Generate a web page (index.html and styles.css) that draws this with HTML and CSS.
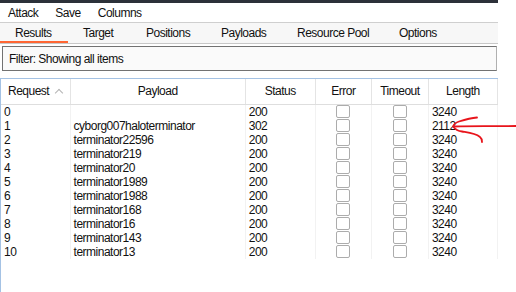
FILE: index.html
```html
<!DOCTYPE html>
<html lang="en">
<head>
    <meta charset="UTF-8">
    <title>Intruder attack</title>
    <link rel="stylesheet" href="styles.css">
</head>
<body>

<div class="window">
    <div class="titlebar"></div>

    <!--菜单-->
    <div class="menubar">
        <span class="menubar__item">Attack</span>
        <span class="menubar__item">Save</span>
        <span class="menubar__item">Columns</span>
    </div>

    <!--标签页-->
    <div class="tabs">
        <span class="tabs__tab tabs__tab--active">Results</span>
        <span class="tabs__tab">Target</span>
        <span class="tabs__tab">Positions</span>
        <span class="tabs__tab">Payloads</span>
        <span class="tabs__tab">Resource Pool</span>
        <span class="tabs__tab">Options</span>
    </div>

    <div class="filter">Filter: Showing all items</div>

    <!--结果表格-->
    <div class="results">
        <table class="grid">
            <colgroup>
                <col style="width:69px">
                <col style="width:175px">
                <col style="width:70px">
                <col style="width:56px">
                <col style="width:57px">
                <col style="width:69px">
            </colgroup>
            <thead>
            <tr>
                <th class="grid__sort">Request <span class="grid__arrow"></span></th>
                <th>Payload</th>
                <th>Status</th>
                <th>Error</th>
                <th>Timeout</th>
                <th>Length</th>
            </tr>
            </thead>
            <tbody>
            <tr><td>0</td><td></td><td>200</td><td class="grid__box"><span class="check"></span></td><td class="grid__box"><span class="check"></span></td><td>3240</td></tr>
            <tr><td>1</td><td>cyborg007haloterminator</td><td>302</td><td class="grid__box"><span class="check"></span></td><td class="grid__box"><span class="check"></span></td><td>2112</td></tr>
            <tr><td>2</td><td>terminator22596</td><td>200</td><td class="grid__box"><span class="check"></span></td><td class="grid__box"><span class="check"></span></td><td>3240</td></tr>
            <tr><td>3</td><td>terminator219</td><td>200</td><td class="grid__box"><span class="check"></span></td><td class="grid__box"><span class="check"></span></td><td>3240</td></tr>
            <tr><td>4</td><td>terminator20</td><td>200</td><td class="grid__box"><span class="check"></span></td><td class="grid__box"><span class="check"></span></td><td>3240</td></tr>
            <tr><td>5</td><td>terminator1989</td><td>200</td><td class="grid__box"><span class="check"></span></td><td class="grid__box"><span class="check"></span></td><td>3240</td></tr>
            <tr><td>6</td><td>terminator1988</td><td>200</td><td class="grid__box"><span class="check"></span></td><td class="grid__box"><span class="check"></span></td><td>3240</td></tr>
            <tr><td>7</td><td>terminator168</td><td>200</td><td class="grid__box"><span class="check"></span></td><td class="grid__box"><span class="check"></span></td><td>3240</td></tr>
            <tr><td>8</td><td>terminator16</td><td>200</td><td class="grid__box"><span class="check"></span></td><td class="grid__box"><span class="check"></span></td><td>3240</td></tr>
            <tr><td>9</td><td>terminator143</td><td>200</td><td class="grid__box"><span class="check"></span></td><td class="grid__box"><span class="check"></span></td><td>3240</td></tr>
            <tr><td>10</td><td>terminator13</td><td>200</td><td class="grid__box"><span class="check"></span></td><td class="grid__box"><span class="check"></span></td><td>3240</td></tr>
            </tbody>
        </table>
    </div>
</div>

<!--红色箭头标注-->
<svg class="mark" width="76" height="40" viewBox="0 0 76 40">
    <path d="M76 16 C66 16.5 40 15.5 14 16.5" fill="none" stroke="#e8141b" stroke-width="1.8" stroke-linecap="round"/>
    <path d="M37 7.5 C32 8 24 10 19 11.5 C16 12.5 14 14 13 16.5 C15 19 18 21 22 21.5 C28 22.5 35 23 40 27 C42 28.5 42 30.5 42 32" fill="none" stroke="#e8141b" stroke-width="1.8" stroke-linecap="round" stroke-linejoin="round"/>
</svg>

</body>
</html>
```

FILE: styles.css
```css
* {
    box-sizing: border-box;
    margin: 0;
    padding: 0;
}

body {
    background-color: #fff;
    color: #111;
    font: 12px/1 "Liberation Sans", Arial, sans-serif;
    letter-spacing: -0.5px;
    position: relative;
    height: 292px;
    overflow: hidden;
}

.window {
    display: flex;
    flex-direction: column;
    width: 498px;
    height: 100%;
}

.titlebar {
    background-color: #2c3139;
    height: 3px;
    flex-shrink: 0;
}

/* 菜单 */
.menubar {
    display: flex;
    gap: 17px;
    align-items: center;
    flex-shrink: 0;
    height: 19px;
    padding-left: 8px;
}

/* 标签页 */
.tabs {
    display: flex;
    align-items: center;
    flex-shrink: 0;
    background-color: #f7f7f7;
    border-top: 1px solid #cfcfcf;
    border-bottom: 1px solid #c8c8c8;
    height: 22px;
}

.tabs__tab {
    display: flex;
    align-items: center;
    height: 100%;
    padding-left: 15px;
}

.tabs__tab:nth-child(1) { width: 68px; }
.tabs__tab:nth-child(2) { width: 63px; }
.tabs__tab:nth-child(3) { width: 75px; }
.tabs__tab:nth-child(4) { width: 76px; }
.tabs__tab:nth-child(5) { width: 102px; }

.tabs__tab--active {
    box-shadow: 0 -2px 0 #ff6633 inset;
}

.filter {
    display: flex;
    align-items: center;
    flex-shrink: 0;
    background-color: #fafafa;
    border: 1px solid #727272;
    border-right-color: #b0b0b0;
    height: 25px;
    margin: 2px 1px 0 2px;
    padding-left: 6px;
}

/* 结果表格 */
.results {
    flex: 1;
    border-top: 1px solid #a4c2e4;
    border-left: 1px solid #a4c2e4;
    margin-top: 7px;
}

.grid {
    border-collapse: collapse;
    table-layout: fixed;
    width: 497px;
}

.grid th {
    border-right: 1px solid #e4e4e4;
    border-bottom: 1px solid #dedede;
    font-weight: normal;
    height: 25px;
    text-align: center;
}

.grid th.grid__sort {
    text-align: left;
    padding-left: 7px;
}

.grid__arrow {
    display: inline-block;
    border-top: 1px solid #b4b4b4;
    border-left: 1px solid #b4b4b4;
    width: 6px;
    height: 6px;
    margin-left: 4px;
    transform: translateY(1px) rotate(45deg);
}

.grid td {
    border-right: 1px solid #f2f2f2;
    height: 14px;
    line-height: 14px;
    padding: 0 3px;
    white-space: nowrap;
}

.grid td.grid__box {
    text-align: center;
    padding: 0;
    vertical-align: top;
}

.check {
    display: inline-block;
    background-color: #fff;
    border: 1px solid #acacac;
    border-radius: 2px;
    width: 14px;
    height: 13px;
    vertical-align: top;
}

.mark {
    position: absolute;
    left: 440px;
    top: 110px;
}
```
